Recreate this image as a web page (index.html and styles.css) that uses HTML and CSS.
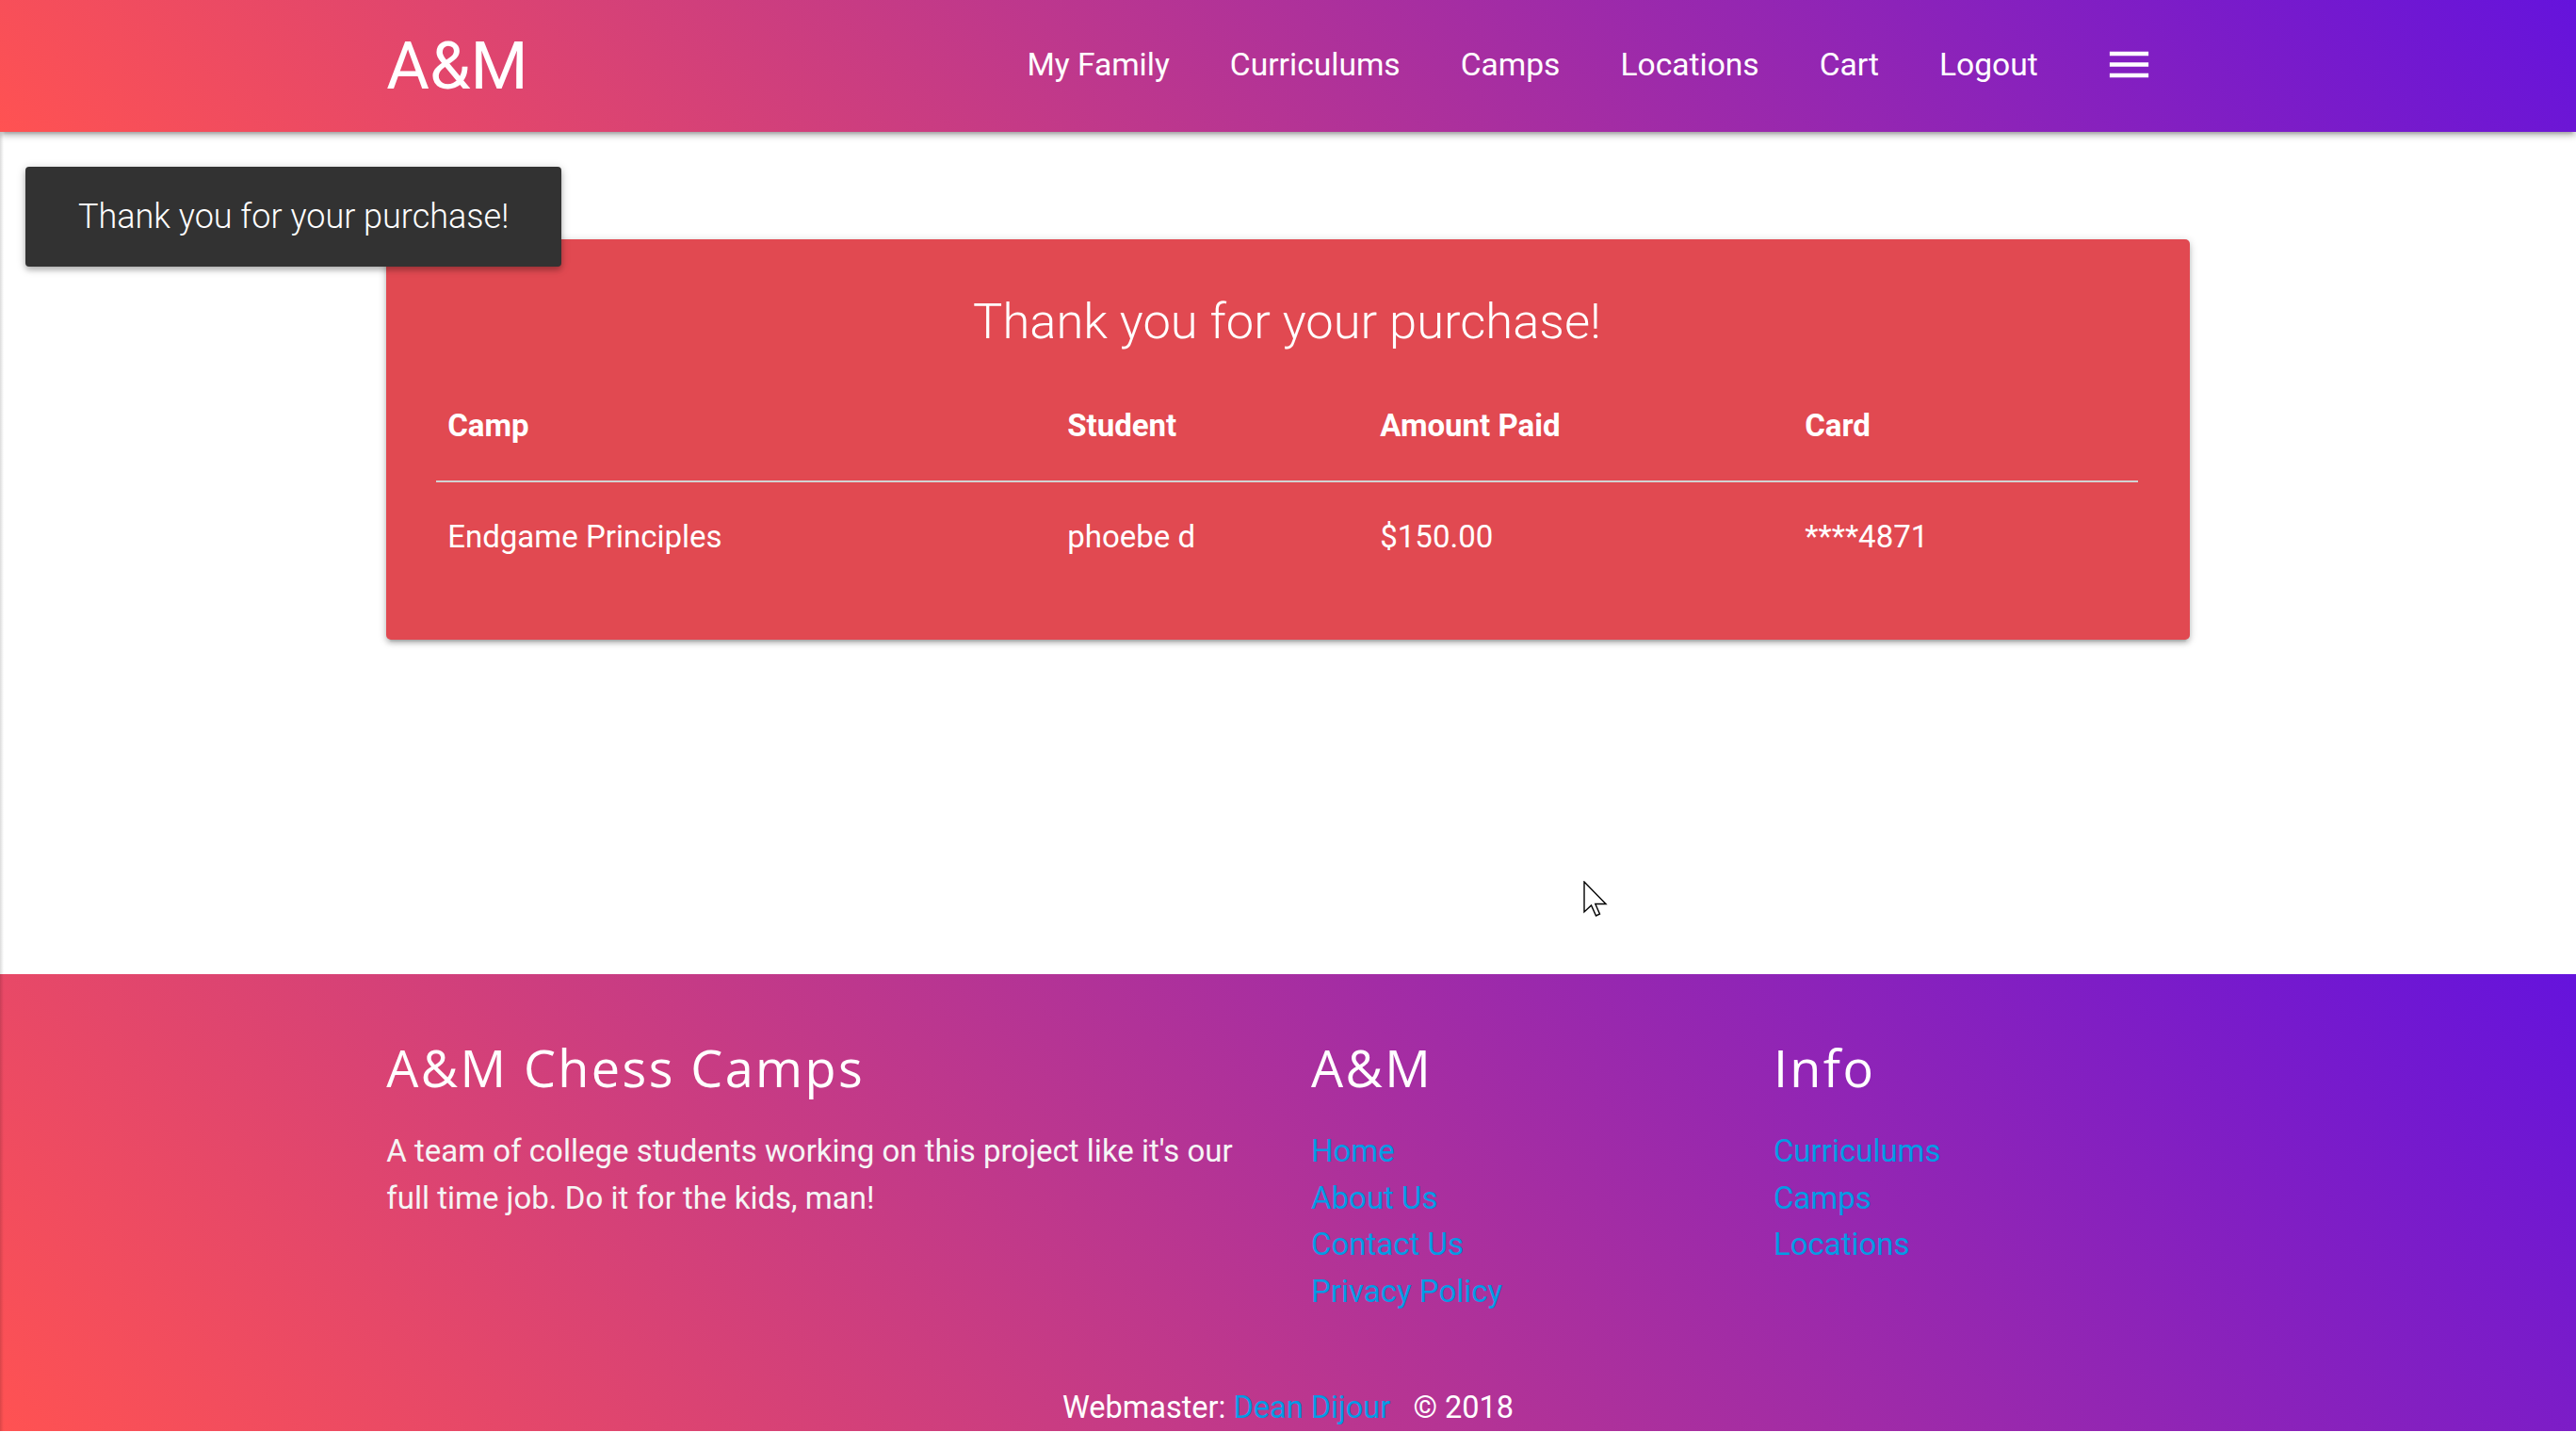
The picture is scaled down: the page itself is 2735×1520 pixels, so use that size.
FILE: index.html
```html
<!DOCTYPE html>
<html lang="en">
<head>
<meta charset="utf-8">
<title>A&amp;M Chess Camps</title>
<link rel="stylesheet" href="styles.css">
</head>
<body>
<header class="nav">
  <div class="container nav-inner">
    <a class="brand" href="#">A&amp;M</a>
    <ul class="nav-links">
      <li><a href="#">My Family</a></li>
      <li><a href="#">Curriculums</a></li>
      <li><a href="#">Camps</a></li>
      <li><a href="#">Locations</a></li>
      <li><a href="#">Cart</a></li>
      <li><a href="#">Logout</a></li>
      <li><a class="menu-btn" href="#"><svg class="menu-icon" viewBox="0 0 24 24"><path d="M3 18h18v-2H3v2zm0-5h18v-2H3v2zm0-7v2h18V6H3z" fill="#fff"/></svg></a></li>
    </ul>
  </div>
</header>

<main class="main">
  <div class="container">
    <div class="card">
      <h4 class="card-title">Thank you for your purchase!</h4>
      <table class="receipt">
        <thead>
          <tr>
            <th class="c1">Camp</th>
            <th class="c2">Student</th>
            <th class="c3">Amount Paid</th>
            <th class="c4">Card</th>
          </tr>
        </thead>
        <tbody>
          <tr>
            <td>Endgame Principles</td>
            <td>phoebe d</td>
            <td>$150.00</td>
            <td>****4871</td>
          </tr>
        </tbody>
      </table>
    </div>
  </div>
</main>

<footer class="footer">
  <div class="container">
    <div class="footer-row">
      <div class="col">
        <h5 class="footer-title">A&amp;M Chess Camps</h5>
        <p class="footer-text">A team of college students working on this project like it's our full time job. Do it for the kids, man!</p>
      </div>
      <div class="col">
        <h5 class="footer-title">A&amp;M</h5>
        <ul class="footer-links">
          <li><a href="#">Home</a></li>
          <li><a href="#">About Us</a></li>
          <li><a href="#">Contact Us</a></li>
          <li><a href="#">Privacy Policy</a></li>
        </ul>
      </div>
      <div class="col">
        <h5 class="footer-title">Info</h5>
        <ul class="footer-links">
          <li><a href="#">Curriculums</a></li>
          <li><a href="#">Camps</a></li>
          <li><a href="#">Locations</a></li>
        </ul>
      </div>
    </div>
  </div>
  <div class="copyright">Webmaster: <a href="#">Dean Dijour</a>&nbsp;&nbsp; © 2018</div>
</footer>

<div class="toast">Thank you for your purchase!</div>
<div class="edge-shade"></div>
<svg class="cursor" viewBox="0 0 26 38"><path d="M1 1 V33 L8.5 26 L13.5 37 L17.5 35.2 L12.8 24.5 H24 Z" fill="#fff" stroke="#000" stroke-width="1.4" stroke-linejoin="miter"/></svg>
</body>
</html>
```

FILE: styles.css
```css
html, body {
  margin: 0;
  padding: 0;
  overflow: hidden;
}

body {
  font-family: Roboto, "Liberation Sans", sans-serif;
  color: #fff;
  background: #fff;
  position: relative;
}

a {
  text-decoration: none;
}

ul {
  list-style: none;
  margin: 0;
  padding: 0;
}

.container {
  width: 70%;
  margin: 0 auto;
}

/* NAV */
.nav {
  height: 140px;
  background: linear-gradient(45deg, #ff5252, #6513dc);
  box-shadow: 0 4px 5px 0 rgba(0,0,0,0.14), 0 6px 2px -4px rgba(0,0,0,0.12), 0 2px 10px 0 rgba(0,0,0,0.2);
  position: relative;
  z-index: 2;
}

.nav-inner {
  display: flex;
  align-items: center;
  justify-content: space-between;
  height: 140px;
}

.brand {
  color: #fff;
  font-size: 70px;
  line-height: 140px;
  font-weight: 400;
}

.nav-links {
  display: flex;
  align-items: center;
  height: 140px;
}

.nav-links a {
  display: block;
  color: #fff;
  font-size: 33.6px;
  line-height: 137px;
  padding: 0 32px 3px;
}

.nav-links .menu-btn {
  display: flex;
  align-items: center;
  height: 140px;
  padding: 0 37px 0 37px;
}

.menu-icon {
  width: 55px;
  height: 55px;
  display: block;
  margin-top: -4px;
}

/* MAIN */
.main {
  height: 894px;
  box-sizing: border-box;
  padding-top: 114px;
}

.card {
  background: #e14951;
  border-radius: 5px;
  padding: 52px 55px 51px 53px;
  box-shadow: 0 4px 5px 0 rgba(0,0,0,0.14), 0 6px 2px -4px rgba(0,0,0,0.12), 0 2px 10px 0 rgba(0,0,0,0.2);
}

.card-title {
  margin: 0 0 17.5px;
  text-align: center;
  font-size: 52.5px;
  line-height: 70px;
  font-weight: 300;
}

.receipt {
  width: 100%;
  border-collapse: collapse;
  table-layout: fixed;
}

.receipt th,
.receipt td {
  text-align: left;
  font-size: 33px;
  line-height: 49.5px;
  padding: 33.5px 12px;
}

.receipt th {
  font-weight: 700;
}

.receipt td {
  font-weight: 400;
  padding-top: 33px;
}

.receipt thead tr {
  border-bottom: 2px solid #d2d2d2;
}

.c1 { width: 634px; }
.c2 { width: 308px; }
.c3 { width: 427px; }

/* FOOTER */
.footer {
  height: 485px;
  box-sizing: border-box;
  padding-top: 69.5px;
  display: flex;
  flex-direction: column;
  background: linear-gradient(45deg, #ff5252, #6513dc);
}

.footer-row {
  display: grid;
  grid-template-columns: 2fr 1fr 1fr;
  margin: 0 -24.5px;
}

.col {
  padding: 0 24.5px;
}

.footer-title {
  margin: 0 0 35.5px;
  font-family: "Open Sans", "Noto Sans", sans-serif;
  font-weight: 400;
  font-size: 54px;
  line-height: 58px;
  letter-spacing: 2.4px;
  color: #fff;
}

.footer-text {
  margin: 0;
  font-size: 33px;
  line-height: 49.5px;
  color: #f5f5f5;
}

.footer-links li {
  font-size: 33px;
  line-height: 49.5px;
}

.footer-links a {
  color: #039be5;
}

.copyright {
  margin-top: auto;
  text-align: center;
  font-size: 32.5px;
  line-height: 49.5px;
  padding-bottom: 0;
  color: #fff;
}

.copyright a {
  color: #039be5;
}

/* OVERLAYS */
.toast {
  position: absolute;
  left: 27px;
  top: 177px;
  height: 106px;
  box-sizing: border-box;
  padding: 0 56px;
  display: flex;
  align-items: center;
  background: #323232;
  color: #fff;
  border-radius: 4px;
  font-size: 36px;
  font-weight: 300;
  z-index: 5;
  box-shadow: 0 4px 5px 0 rgba(0,0,0,0.14), 0 2px 10px 0 rgba(0,0,0,0.25);
}

.edge-shade {
  position: absolute;
  left: 0;
  top: 140px;
  width: 4px;
  height: 1380px;
  background: linear-gradient(to right, rgba(0,0,0,0.14), rgba(0,0,0,0));
  z-index: 1;
}

.cursor {
  position: absolute;
  left: 1681px;
  top: 935px;
  width: 26px;
  height: 38px;
  z-index: 6;
}
```
